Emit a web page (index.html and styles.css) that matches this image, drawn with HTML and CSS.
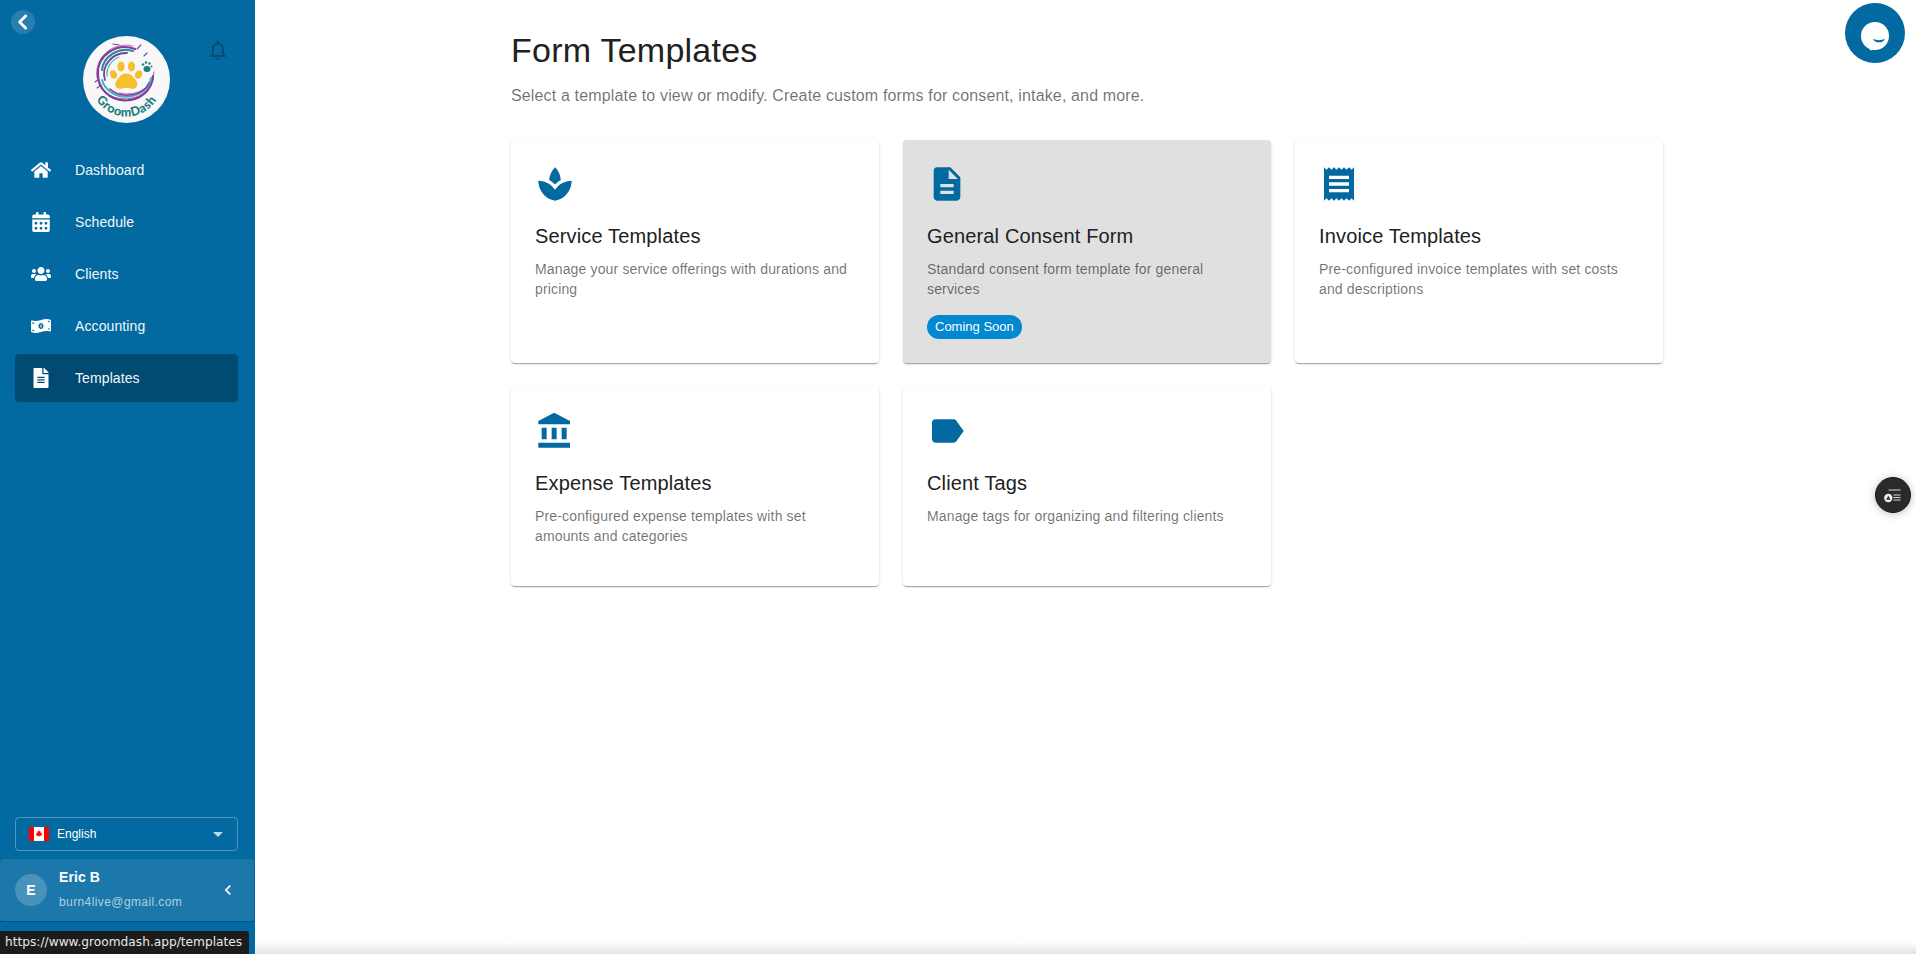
FILE: index.html
```html
<!DOCTYPE html>
<html lang="en">
<head>
<meta charset="utf-8">
<title>Form Templates</title>
<link rel="stylesheet" href="styles.css">
</head>
<body>
<div class="app">
  <aside class="sidebar">
    <button class="back" aria-label="Back"><svg viewBox="0 0 24 24"><path d="M15.500 4 7.500 12l8 8" /></svg></button>
    <div class="brand">
      <svg class="logo" viewBox="0 0 87 87">
        <circle cx="43.500" cy="43.500" r="43.500" fill="#f8f8f8"/>
        <g fill="none" stroke-linecap="round">
          <path d="M71 36A29 26 0 0 1 20 54" stroke="#d63a9b" stroke-width=".9"/>
          <path d="M14 42A29 28 0 0 1 50 10" stroke="#d63a9b" stroke-width=".8"/>
          <path d="M70 40A27 25 0 0 1 15 38A27 25 0 0 1 52 13" stroke="#7b3fa0" stroke-width="2.200"/>
          <path d="M68 42A25 22 0 0 1 19 44" stroke="#3fb3b5" stroke-width="2"/>
          <path d="M19 34A24 22 0 0 1 50 15" stroke="#2f8f96" stroke-width="2.200"/>
          <path d="M22 44A22 21 0 0 1 44 17" stroke="#7b3fa0" stroke-width="1.800"/>
          <path d="M66 47A23 18 0 0 1 27 53" stroke="#7b3fa0" stroke-width="1.600"/>
          <path d="M24 40A20 19 0 0 1 36 21" stroke="#3fb3b5" stroke-width="1.200"/>
          <path d="M61 53A22 14 0 0 1 36 57" stroke="#d63a9b" stroke-width=".8"/>
          <path d="M12 46l4-3M14 52l4-3M58 9l-4 4M30 8l6 1M64 17l-3 3" stroke="#7b3fa0" stroke-width="1.100"/>
        </g>
        <g fill="#f4c02e">
          <ellipse cx="30.500" cy="38.500" rx="3.400" ry="4.300" transform="rotate(-25 30.500 38.500)"/>
          <ellipse cx="38" cy="30.500" rx="3.600" ry="5"/>
          <ellipse cx="48.500" cy="30.500" rx="3.600" ry="5"/>
          <ellipse cx="55.500" cy="38.500" rx="3.400" ry="4.300" transform="rotate(25 55.500 38.500)"/>
          <path d="M43.300 37.500c4.500 0 7 3.500 9.200 6.300 2.500 3 2.800 8.200-1.800 9-3 .4-4.700-1-7.400-1s-4.400 1.400-7.400 1c-4.600-.8-4.300-6-1.800-9 2.200-2.800 4.700-6.300 9.200-6.300z"/>
        </g>
        <g fill="#1f7f80">
          <ellipse cx="64" cy="33" rx="3.500" ry="3"/>
          <circle cx="60" cy="28.500" r="1.200"/><circle cx="63" cy="26.500" r="1.200"/><circle cx="66.500" cy="27.500" r="1.200"/><circle cx="68.500" cy="30.500" r="1"/>
        </g>
        <path id="logo-arc" d="M10 57A35.600 35.600 0 0 0 77 57" fill="none"/>
        <text class="logo-text"><textPath href="#logo-arc" startOffset="50%" text-anchor="middle">GroomDash</textPath></text>
      </svg>
      <svg class="bell" viewBox="0 0 24 24"><path d="M12 22c1.100 0 2-.9 2-2h-4c0 1.100.89 2 2 2zm6-6v-5c0-3.070-1.630-5.640-4.500-6.320V4c0-.83-.67-1.500-1.500-1.500s-1.500.67-1.500 1.500v.68C7.640 5.360 6 7.920 6 11v5l-2 2v1h16v-1l-2-2zm-2 1H8v-6c0-2.480 1.510-4.500 4-4.500s4 2.020 4 4.500v6z"/></svg>
    </div>
    <nav class="nav">
      <a class="nav-item"><svg class="nav-icon" viewBox="0 0 576 512"><path d="M280.37 148.26L96 300.11V464a16 16 0 0 0 16 16l112.06-.29a16 16 0 0 0 15.92-16V368a16 16 0 0 1 16-16h64a16 16 0 0 1 16 16v95.64a16 16 0 0 0 16 16.05L464 480a16 16 0 0 0 16-16V300L295.67 148.26a12.19 12.19 0 0 0-15.3 0zM571.6 251.47L488 182.56V44.05a12 12 0 0 0-12-12h-56a12 12 0 0 0-12 12v72.61L318.47 43a48 48 0 0 0-61 0L4.340 251.47a12 12 0 0 0-1.600 16.9l25.5 31A12 12 0 0 0 45.150 301l235.22-193.74a12.190 12.190 0 0 1 15.3 0L530.9 301a12 12 0 0 0 16.9-1.600l25.5-31a12 12 0 0 0-1.700-16.93z"/></svg><span>Dashboard</span></a>
      <a class="nav-item"><svg class="nav-icon" viewBox="0 0 448 512"><path d="M0 464c0 26.500 21.500 48 48 48h352c26.500 0 48-21.500 48-48V192H0v272zm320-196c0-6.600 5.400-12 12-12h40c6.600 0 12 5.400 12 12v40c0 6.600-5.400 12-12 12h-40c-6.600 0-12-5.400-12-12v-40zm0 128c0-6.600 5.400-12 12-12h40c6.600 0 12 5.400 12 12v40c0 6.600-5.400 12-12 12h-40c-6.600 0-12-5.400-12-12v-40zM192 268c0-6.600 5.400-12 12-12h40c6.600 0 12 5.400 12 12v40c0 6.600-5.400 12-12 12h-40c-6.600 0-12-5.400-12-12v-40zm0 128c0-6.600 5.400-12 12-12h40c6.600 0 12 5.400 12 12v40c0 6.600-5.400 12-12 12h-40c-6.600 0-12-5.400-12-12v-40zM64 268c0-6.600 5.400-12 12-12h40c6.600 0 12 5.400 12 12v40c0 6.600-5.400 12-12 12H76c-6.600 0-12-5.400-12-12v-40zm0 128c0-6.600 5.400-12 12-12h40c6.600 0 12 5.400 12 12v40c0 6.600-5.400 12-12 12H76c-6.600 0-12-5.400-12-12v-40zM400 64h-48V16c0-8.800-7.200-16-16-16h-32c-8.800 0-16 7.200-16 16v48H160V16c0-8.800-7.200-16-16-16h-32c-8.800 0-16 7.200-16 16v48H48C21.500 64 0 85.500 0 112v48h448v-48c0-26.500-21.500-48-48-48z"/></svg><span>Schedule</span></a>
      <a class="nav-item"><svg class="nav-icon" viewBox="0 0 640 512"><path d="M96 224c35.300 0 64-28.700 64-64s-28.700-64-64-64-64 28.700-64 64 28.700 64 64 64zm448 0c35.300 0 64-28.700 64-64s-28.700-64-64-64-64 28.700-64 64 28.700 64 64 64zm32 32h-64c-17.600 0-33.500 7.100-45.100 18.600 40.300 22.100 68.900 62 75.100 109.400h66c17.700 0 32-14.300 32-32v-32c0-35.300-28.700-64-64-64zm-256 0c61.900 0 112-50.100 112-112S381.900 32 320 32 208 82.100 208 144s50.100 112 112 112zm76.800 32h-8.300c-20.800 10-43.900 16-68.500 16s-47.600-6-68.500-16h-8.300C179.600 288 128 339.600 128 403.200V432c0 26.500 21.500 48 48 48h288c26.500 0 48-21.500 48-48v-28.800c0-63.600-51.600-115.200-115.200-115.200zm-223.700-13.400C161.500 263.100 145.600 256 128 256H64c-35.300 0-64 28.700-64 64v32c0 17.700 14.300 32 32 32h65.900c6.300-47.400 34.900-87.300 75.200-109.400z"/></svg><span>Clients</span></a>
      <a class="nav-item"><svg class="nav-icon" viewBox="0 0 640 512"><path d="M621.160 54.460C582.370 38.190 543.550 32 504.750 32c-123.170-.01-246.330 62.340-369.500 62.340-30.890 0-61.760-3.920-92.650-13.720-3.470-1.100-6.950-1.620-10.350-1.620C15.040 79 0 92.320 0 110.810v317.260c0 12.630 7.230 24.600 18.840 29.460C57.630 473.810 96.450 480 135.250 480c123.170 0 246.340-62.350 369.510-62.350 30.890 0 61.760 3.920 92.650 13.720 3.470 1.100 6.950 1.620 10.350 1.620 17.210 0 32.250-13.320 32.250-31.810V83.930c-.01-12.640-7.240-24.600-18.850-29.470zM48 132.220c20.120 5.040 41.120 7.570 62.720 8.930C104.840 170.540 79 192.690 48 192.690v-60.470zm0 285v-47.780c34.370 0 62.180 27.270 63.710 61.400-22.530-1.810-43.590-6.310-63.710-13.620zM320 352c-44.190 0-80-42.990-80-96 0-53.020 35.820-96 80-96s80 42.980 80 96c0 53.030-35.830 96-80 96zm272 27.780c-17.520-4.390-35.710-6.850-54.320-8.440 5.870-26.080 27.500-45.880 54.320-49.280v57.720zm0-236.110c-30.890-3.910-54.860-29.700-55.810-61.550 19.540 2.170 38.090 6.230 55.810 12.660v48.890z"/><rect x="304" y="205" width="34" height="100"/></svg><span>Accounting</span></a>
      <a class="nav-item active"><svg class="nav-icon" viewBox="0 0 384 512"><path d="M224 136V0H24C10.700 0 0 10.700 0 24v464c0 13.300 10.700 24 24 24h336c13.300 0 24-10.700 24-24V160H248c-13.200 0-24-10.800-24-24zm64 236c0 6.600-5.400 12-12 12H108c-6.600 0-12-5.400-12-12v-8c0-6.600 5.400-12 12-12h168c6.600 0 12 5.400 12 12v8zm0-64c0 6.600-5.400 12-12 12H108c-6.600 0-12-5.400-12-12v-8c0-6.600 5.400-12 12-12h168c6.600 0 12 5.400 12 12v8zm0-72v8c0 6.600-5.400 12-12 12H108c-6.600 0-12-5.400-12-12v-8c0-6.600 5.400-12 12-12h168c6.600 0 12 5.400 12 12zm96-114.100v6.100H256V0h6.100c6.400 0 12.500 2.500 17 7l97.900 98c4.500 4.500 7 10.600 7 16.900z"/></svg><span>Templates</span></a>
    </nav>
    <div class="lang">
      <svg class="flag" viewBox="0 0 20 14"><rect width="20" height="14" fill="#fff"/><rect width="5" height="14" fill="#f00"/><rect x="15" width="5" height="14" fill="#f00"/><path d="M10 3l.9 1.800 1-.5-.4 2.200 1.200-.6.400 1-1 1.300.4.800-2.200-.2V10h-.6V8.800l-2.200.2.400-.8-1-1.300.4-1 1.200.6-.4-2.200 1 .5z" fill="#f00"/></svg>
      <span class="lang-name">English</span>
      <svg class="caret" viewBox="0 0 24 24"><path d="M7 10l5 5 5-5z"/></svg>
    </div>
    <div class="user">
      <div class="avatar">E</div>
      <div class="user-text">
        <div class="user-name">Eric B</div>
        <div class="user-mail">burn4live@gmail.com</div>
      </div>
      <svg class="user-chev" viewBox="0 0 24 24"><path d="M15.410 7.410 14 6l-6 6 6 6 1.410-1.410L10.830 12z"/></svg>
    </div>
    <div class="foot"></div>
  </aside>
  <main class="main">
    <h1 class="title">Form Templates</h1>
    <p class="sub">Select a template to view or modify. Create custom forms for consent, intake, and more.</p>
    <div class="grid">
      <article class="card">
        <svg class="card-icon" viewBox="0 0 24 24"><path d="M15.490 9.630c-.18-2.790-1.310-5.510-3.430-7.630-2.140 2.140-3.320 4.860-3.550 7.630 1.280.68 2.460 1.560 3.490 2.630 1.030-1.060 2.210-1.940 3.490-2.630zM12 15.450C9.850 12.170 6.180 10 2 10c0 5.320 3.360 9.820 8.030 11.490.63.23 1.290.4 1.970.51.68-.12 1.330-.29 1.970-.51C18.640 19.820 22 15.320 22 10c-4.180 0-7.850 2.170-10 5.450z"/></svg>
        <h2 class="card-title">Service Templates</h2>
        <p class="card-desc">Manage your service offerings with durations and pricing</p>
      </article>
      <article class="card muted">
        <svg class="card-icon" viewBox="0 0 24 24"><path d="M14 2H6c-1.100 0-1.990.9-1.990 2L4 20c0 1.100.89 2 1.990 2H18c1.100 0 2-.9 2-2V8l-6-6zm2 16H8v-2h8v2zm0-4H8v-2h8v2zm-3-5V3.500L18.500 9H13z"/></svg>
        <h2 class="card-title">General Consent Form</h2>
        <p class="card-desc">Standard consent form template for general services</p>
        <span class="chip">Coming Soon</span>
      </article>
      <article class="card">
        <svg class="card-icon" viewBox="0 0 24 24"><path d="M18 17H6v-2h12v2zm0-4H6v-2h12v2zm0-4H6V7h12v2zM3 22l1.500-1.500L6 22l1.500-1.500L9 22l1.500-1.500L12 22l1.500-1.500L15 22l1.500-1.500L18 22l1.500-1.500L21 22V2l-1.500 1.500L18 2l-1.500 1.500L15 2l-1.500 1.500L12 2l-1.500 1.500L9 2 7.500 3.500 6 2 4.500 3.500 3 2v20z"/></svg>
        <h2 class="card-title">Invoice Templates</h2>
        <p class="card-desc">Pre-configured invoice templates with set costs and descriptions</p>
      </article>
      <article class="card">
        <svg class="card-icon" viewBox="0 0 24 24"><path d="M4 10v7h3v-7H4zm6 0v7h3v-7h-3zM2 22h19v-3H2v3zm14-12v7h3v-7h-3zm-4.500-9L2 6v2h19V6l-9.500-5z"/></svg>
        <h2 class="card-title">Expense Templates</h2>
        <p class="card-desc">Pre-configured expense templates with set amounts and categories</p>
      </article>
      <article class="card">
        <svg class="card-icon" viewBox="0 0 24 24"><path d="M17.630 5.840C17.270 5.330 16.670 5 16 5L5 5.010C3.900 5.010 3 5.900 3 7v10c0 1.100.9 1.990 2 1.990L16 19c.67 0 1.270-.33 1.630-.84L22 12l-4.370-6.160z"/></svg>
        <h2 class="card-title">Client Tags</h2>
        <p class="card-desc">Manage tags for organizing and filtering clients</p>
      </article>
    </div>
  </main>
</div>
<div class="status">https://www.groomdash.app/templates</div>
<button class="chat" aria-label="Chat"><svg viewBox="0 0 60 60"><circle cx="30" cy="33" r="14" fill="#fff"/><path d="M25 47.500 23.500 40 34 45z" fill="#fff"/><path d="M28 36c4 1.500 8 1.500 12 0-1 2.500-3.500 3.300-6 3.300s-5-.8-6-3.300z" fill="#0369a1"/></svg></button>
<button class="tool" aria-label="Tools"><svg viewBox="0 0 34 34"><g stroke="#d8d8d8" stroke-width="1"><path d="M12.500 12h12M17.500 17h7M17.500 19.500h7M17.500 22h7"/></g><circle cx="12.300" cy="20" r="4.200" fill="#eee"/><path d="M12.300 17.800l2.200 3.900h-4.400z" fill="#2a2a2a"/></svg></button>
</body>
</html>
```
FILE: styles.css
```css
* { box-sizing: border-box; }
html, body { margin: 0; height: 954px; overflow: hidden; background: #fff; }
body { font-family: "Liberation Sans", Arial, sans-serif; color: #212121; }
.app { display: flex; height: 954px; }

.sidebar { position: relative; width: 255px; flex: none; display: flex; flex-direction: column; background: #0369a1; color: #fff; }
.back { position: absolute; left: 11px; top: 10px; width: 24px; height: 24px; padding: 3px; border: 0; border-radius: 50%; background: rgba(255,255,255,.15); }
.back svg { display: block; width: 18px; height: 18px; fill: none; stroke: #fff; stroke-width: 3.8; stroke-linecap: round; stroke-linejoin: round; }
.brand { position: relative; height: 146px; padding: 36px 0 0 83px; }
.logo { display: block; width: 87px; height: 87px; }
.logo-text { font: 900 12.5px "Lato", "Liberation Sans", sans-serif; letter-spacing: .6px; fill: #1a7f7e; }
.bell { position: absolute; left: 206px; top: 38px; width: 24px; height: 24px; fill: #064b74; }

.nav { display: flex; flex-direction: column; gap: 4px; padding: 0 17px 0 15px; flex: 1; }
.nav-item { display: flex; align-items: center; height: 48px; padding-left: 16px; border-radius: 4px; font-size: 14px; letter-spacing: .1px; color: #f2f7fa; }
.nav-item.active { background: #014b73; }
.nav-icon { width: 20px; height: 20px; flex: none; fill: #fff; margin-right: 24px; }

.lang { display: flex; align-items: center; height: 34px; margin: 0 17px 8px 15px; padding: 0 7px 0 13px; border: 1px solid rgba(255,255,255,.3); border-radius: 4px; font-size: 12px; }
.flag { width: 20px; height: 14px; margin-right: 8px; }
.lang-name { flex: 1; margin-top: -1px; }
.caret { width: 24px; height: 24px; fill: rgba(255,255,255,.75); }

.user { display: flex; align-items: center; height: 62px; margin-right: 1px; padding: 0 15px; background: rgba(255,255,255,.1); border-radius: 4px; }
.avatar { width: 32px; height: 32px; flex: none; display: flex; align-items: center; justify-content: center; margin-right: 12px; border-radius: 50%; background: rgba(255,255,255,.2); font-size: 14px; font-weight: 700; }
.user-text { flex: 1; }
.user-name { font-size: 14px; font-weight: 700; line-height: 20px; letter-spacing: .1px; margin: -2px 0 6px; }
.user-mail { font-size: 12px; line-height: 18px; letter-spacing: .4px; color: rgba(255,255,255,.65); }
.user-chev { width: 20px; height: 20px; fill: #fff; margin-right: 1px; }
.foot { height: 33px; border-top: 1px solid #04527e; }

.main { position: relative; flex: 1; min-width: 0; padding: 30px 0 0 256px; }
.main::after { content: ""; position: absolute; left: 0; right: 0; bottom: 0; height: 12px; background: linear-gradient(to bottom, rgba(224,224,224,0), #e2e2e2); }
.title { margin: 0; font-size: 34px; font-weight: 400; line-height: 1.235; letter-spacing: .25px; color: #212121; }
.sub { margin: 12px 0 32px; font-size: 16px; line-height: 24px; letter-spacing: .15px; color: rgba(0,0,0,.56); }
.grid { display: grid; grid-template-columns: repeat(3, 368px); gap: 24px; }
.card { display: flex; flex-direction: column; align-items: flex-start; padding: 24px; background: #fff; border-radius: 4px; box-shadow: 0 2px 1px -1px rgba(0,0,0,.2), 0 1px 1px 0 rgba(0,0,0,.14), 0 1px 3px 0 rgba(0,0,0,.12); }
.card.muted { background: #e0e0e0; }
.card-icon { display: block; width: 40px; height: 40px; margin-bottom: 16px; fill: #0369a1; }
.card-title { margin: 0 0 7px; font-size: 20px; font-weight: 400; line-height: 32px; letter-spacing: .15px; color: #212121; }
.card-desc { margin: 0 0 16px; font-size: 14px; line-height: 20px; letter-spacing: .15px; color: rgba(0,0,0,.56); }
.chip { display: inline-flex; align-items: center; height: 24px; padding: 0 8px; border-radius: 12px; background: #0288d1; color: #fff; font-size: 13px; }

.status { position: fixed; left: 0; bottom: 0; width: 249px; height: 23px; padding-left: 5px; background: #1c1c1c; border-radius: 0 3px 0 0; color: #e8e8e8; font: 12.2px/23px "DejaVu Sans", sans-serif; white-space: nowrap; }
.chat { position: fixed; left: 1845px; top: 3px; width: 60px; height: 60px; padding: 0; border: 0; border-radius: 50%; background: #0369a1; }
.chat svg { display: block; width: 60px; height: 60px; }
.tool { position: fixed; left: 1875px; top: 477px; width: 36px; height: 36px; padding: 0; border: 1px solid #161616; border-radius: 50%; background: #2a2a2a; box-shadow: 0 1px 8px rgba(0,0,0,.25); }
.tool svg { display: block; width: 34px; height: 34px; }
```
